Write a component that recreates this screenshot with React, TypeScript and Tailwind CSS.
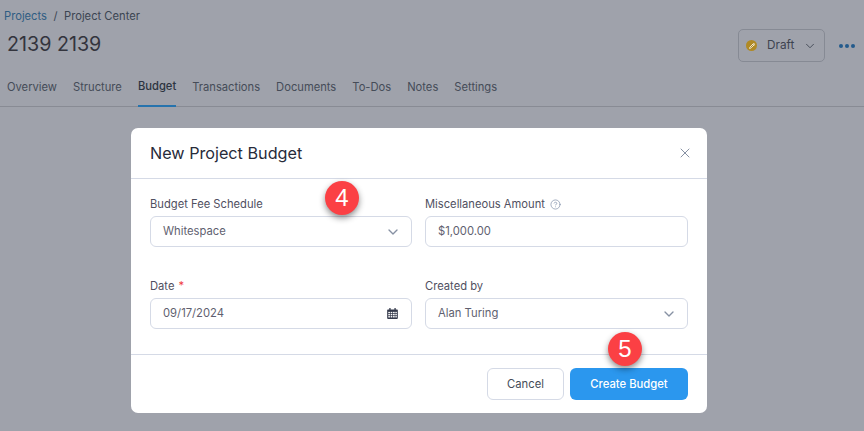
import { ChevronDown, CircleHelp, Pencil, X } from 'lucide-react';

const tabs = ['Overview', 'Structure', 'Budget', 'Transactions', 'Documents', 'To-Dos', 'Notes', 'Settings'];

function Badge({ n }: { n: number }) {
  return (
    <div className="absolute z-10 flex h-[34px] w-[34px] items-center justify-center rounded-full bg-[#fb4044] text-[24px] leading-none text-white shadow-[0_3px_6px_rgba(0,0,0,0.45)] font-['Liberation_Sans',sans-serif]">
      {n}
    </div>
  );
}

function CalendarIcon() {
  return (
    <svg viewBox="0 0 12 12" className="mr-[3px] h-[11px] w-[11px] text-[#33384a]" fill="currentColor">
      <rect x="2.5" y="0" width="1.4" height="2.5" />
      <rect x="8.1" y="0" width="1.4" height="2.5" />
      <path d="M1 1.5h10a.8.8 0 0 1 .8.8V11a1 1 0 0 1-1 1H1.2a1 1 0 0 1-1-1V2.3a.8.8 0 0 1 .8-.8z" />
      <g fill="#ffffff">
        <rect x="1.4" y="4.2" width="1.8" height="1.5" />
        <rect x="4" y="4.2" width="1.8" height="1.5" />
        <rect x="6.6" y="4.2" width="1.8" height="1.5" />
        <rect x="9.1" y="4.2" width="1.6" height="1.5" />
        <rect x="1.4" y="6.5" width="1.8" height="1.5" />
        <rect x="4" y="6.5" width="1.8" height="1.5" />
        <rect x="6.6" y="6.5" width="1.8" height="1.5" />
        <rect x="9.1" y="6.5" width="1.6" height="1.5" />
        <rect x="1.4" y="8.8" width="1.8" height="1.5" />
        <rect x="4" y="8.8" width="1.8" height="1.5" />
        <rect x="6.6" y="8.8" width="1.8" height="1.5" />
        <rect x="9.1" y="8.8" width="1.6" height="1.5" />
      </g>
    </svg>
  );
}

function Dots() {
  return (
    <svg viewBox="0 0 16 4" className="h-[4px] w-[16px] text-[#235a8c]" fill="currentColor">
      <circle cx="2" cy="2" r="2" />
      <circle cx="8" cy="2" r="2" />
      <circle cx="14" cy="2" r="2" />
    </svg>
  );
}

function Field({ label, extra, children }: { label: string; extra?: React.ReactNode; children: React.ReactNode }) {
  return (
    <div className="flex flex-col">
      <div className="flex h-[18px] items-center gap-[4px] pt-[1px] text-[11.2px] leading-none text-[#50505f]">
        {label}
        {extra}
      </div>
      <div className="mt-[3px] flex h-[31px] items-center justify-between rounded-[6px] border border-[#d5dae6] pl-[12px] pr-[10px] text-[11.25px] text-[#5f5f70]">
        {children}
      </div>
    </div>
  );
}

export default function App() {
  return (
    <div className="relative h-[431px] w-[864px] overflow-hidden bg-[#9fa2ab] font-['Inter',sans-serif]">
      <div className="px-[4px] pt-[10px] text-[11.2px] leading-[12px] text-[#3b4552]">
        <span className="text-[#2f5d83]">Projects</span>
        <span className="mx-[6.5px]">/</span>
        Project Center
      </div>

      <div className="flex h-[36px] items-start justify-between pl-[7px] pr-[9px] pt-[2px]">
        <h1 className="mt-[7px] text-[19.7px] leading-[26px] text-[#33343d]">2139 2139</h1>
        <div className="mt-[5px] flex items-center gap-[14px]">
          <div className="flex h-[33px] w-[87px] items-center rounded-[5px] border border-[#868a94] pl-[7px] text-[11.25px] text-[#3d4350]">
            <span className="flex h-[11px] w-[11px] items-center justify-center rounded-full bg-[#b08a25]">
              <Pencil className="h-[6px] w-[6px] text-white" strokeWidth={3} />
            </span>
            <span className="ml-[10px] text-[11.75px]">Draft</span>
            <ChevronDown className="ml-[9px] h-[14px] w-[14px]" strokeWidth={1.5} />
          </div>
          <Dots />
        </div>
      </div>

      <nav className="mt-[14px] flex h-[35px] gap-[16px] border-b border-[#888b94] px-[7px] text-[11.2px] text-[#454c58]">
        {tabs.map((t) => (
          <div
            key={t}
            className={
              t === 'Budget'
                ? 'flex h-[35px] items-center border-b-2 border-[#2673ad] pb-[4px] font-medium text-[#2c3440]'
                : 'flex h-[35px] items-center pb-[4px]'
            }
          >
            {t}
          </div>
        ))}
      </nav>

      <div className="absolute left-[131px] top-[128px] flex h-[285px] w-[576px] flex-col rounded-[7px] bg-white">
        <div className="flex h-[51px] items-center justify-between border-b border-[#d5dae6] pl-[19px] pr-[14px]">
          <h2 className="text-[16.2px] font-normal text-[#272b3a]">New Project Budget</h2>
          <X className="h-[16px] w-[16px] text-[#8791a3]" strokeWidth={1.5} />
        </div>

        <div className="grid flex-1 grid-cols-[262px_263px] content-start gap-x-[13px] gap-y-[30px] pl-[19px] pt-[16px]">
          <Field label="Budget Fee Schedule">
            Whitespace
            <ChevronDown className="h-[16px] w-[16px] text-[#8791a3]" />
          </Field>
          <Field
            label="Miscellaneous Amount"
            extra={<CircleHelp className="ml-[1px] h-[11px] w-[11px] text-[#7d8ca6]" strokeWidth={1.5} />}
          >
            $1,000.00
          </Field>
          <Field label="Date" extra={<span className="text-[#f03a3e]">*</span>}>
            09/17/2024
            <CalendarIcon />
          </Field>
          <Field label="Created by">
            Alan Turing
            <ChevronDown className="h-[16px] w-[16px] text-[#8791a3]" />
          </Field>
        </div>

        <div className="flex h-[59px] items-start justify-end gap-[6px] border-t border-[#d5dae6] pr-[19px] pt-[13px] text-[11.25px]">
          <button className="h-[32px] w-[77px] rounded-[6px] border border-[#d5dae6] text-[#454c58]">Cancel</button>
          <button className="h-[32px] w-[118px] rounded-[6px] bg-[#2b97ee] font-medium text-white">Create Budget</button>
        </div>
      </div>

      <div className="absolute left-[325px] top-[181px]">
        <Badge n={4} />
      </div>
      <div className="absolute left-[608px] top-[332px]">
        <Badge n={5} />
      </div>
    </div>
  );
}
